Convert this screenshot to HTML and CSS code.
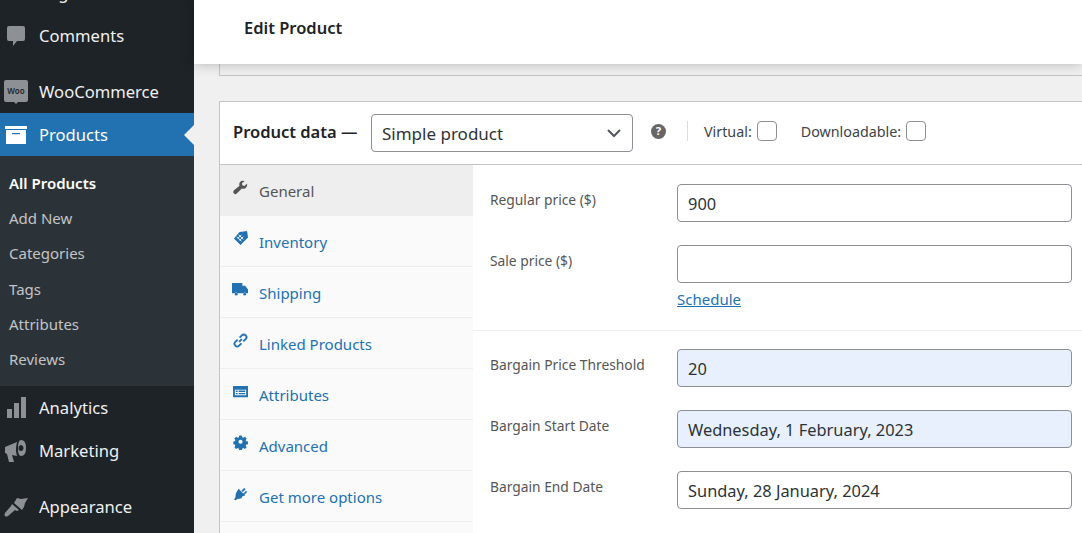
FILE: index.html
```html
<!DOCTYPE html>
<html lang="en">
<head>
    <meta charset="UTF-8">
    <title>Edit Product</title>
    <link rel="stylesheet" href="styles.css">
</head>
<body>
<div class="page">

<nav class="sidebar">
    <a class="menu-item"><svg class="menu-icon" viewBox="0 0 20 20"><path d="M3 2h14v14H3z"/></svg>Pages</a>
    <a class="menu-item comments"><svg class="menu-icon" viewBox="0 0 20 20"><path d="M3 0h14q2 0 2 2v11q0 2-2 2h-6l-4 5v-5H3q-2 0-2-2V2q0-2 2-2z"/></svg>Comments</a>
    <a class="menu-item woo"><svg class="menu-icon wide" viewBox="0 0 24 24"><path d="M2 0h20q2 0 2 2v18q0 2-2 2h-8l-2 2-2-2H2q-2 0-2-2V2q0-2 2-2z"/><text x="12" y="14" class="woo-text">Woo</text></svg>WooCommerce</a>
    <a class="menu-item current"><svg class="menu-icon wide" viewBox="0 0 24 20"><path d="M1 1h22v3H1zM2 5h20v14H2z"/><path class="cut" d="M8 8h8v1.200H8z"/></svg>Products</a>
    <ul class="submenu">
        <li class="active">All Products</li>
        <li>Add New</li>
        <li>Categories</li>
        <li>Tags</li>
        <li>Attributes</li>
        <li>Reviews</li>
    </ul>
    <a class="menu-item analytics"><svg class="menu-icon wide" viewBox="0 0 24 24"><path d="M3 13h5v9H3zM10 7h5v15h-5zM17 1h5v21h-5z"/></svg>Analytics</a>
    <a class="menu-item marketing"><svg class="menu-icon wide" viewBox="0 0 24 24"><path d="M1 8l12-5q-2 8 0 14l-5-1 2 7H5l-2-8-2-1z"/><path fill-rule="evenodd" d="M17 1q5 0 5 8t-5 8q-3 0-3-8t3-8zm0 5a2.500 3 0 1 0 .01 0z"/></svg>Marketing</a>
    <a class="menu-item appearance"><svg class="menu-icon wide" viewBox="0 0 24 24"><path d="M13 3l4 1 7-1-3 5-1 4-2 3-8-7zM8 9l7 6-2 1-2-1-7 6q-2 1-3 0t0-3l6-7z"/></svg>Appearance</a>
</nav>

<main class="content">
    <header class="topbar"><h1>Edit Product</h1></header>
    <div class="prev-box"></div>

    <section class="product-data">
        <div class="box-head">
            <span class="box-title">Product data —</span>
            <div class="select">Simple product
                <svg class="chevron" viewBox="0 0 16 16"><path d="M2 5l6 6 6-6"/></svg>
            </div>
            <svg class="help" viewBox="0 0 16 16"><circle cx="8" cy="8" r="8"/><text x="8" y="12" class="help-text">?</text></svg>
            <span class="head-sep"></span>
            <label class="check-label">Virtual:<span class="checkbox"></span></label>
            <label class="check-label">Downloadable:<span class="checkbox"></span></label>
        </div>

        <div class="box-body">
            <ul class="tabs">
                <li class="tab active"><svg class="tab-icon" viewBox="0 0 16 16"><path d="M15 4l-3 2.500-2-1-.5-2L12.500 1Q9 0 7.500 2T7 6L1 11q-1.500 2 0 3.500t3 0L9.500 9q3 1 4.500-1t1-4z"/></svg>General</li>
                <li class="tab"><svg class="tab-icon" viewBox="0 0 16 16"><path d="M7 1l8-1 1 7-8 8-7-7z"/><path class="tab-cut" d="M5 8l4-4M7 10l4-4M6 4l5 5M4 6l5 5"/></svg>Inventory</li>
                <li class="tab"><svg class="tab-icon truck" viewBox="0 0 17 14"><path d="M0 0h11v3h3l3 4v4h-2a2 2 0 0 0-3 0H6a2 2 0 0 0-3 0H0z"/><circle cx="4.500" cy="12" r="1.500"/><circle cx="13.500" cy="12" r="1.500"/></svg>Shipping</li>
                <li class="tab"><svg class="tab-icon line" viewBox="0 0 16 16"><path d="M6.500 9.500l3-3M5 7L2.500 9.500q-2 2 0 4t4 0L9 11M7 5l2.500-2.500q2-2 4 0t0 4L11 9"/></svg>Linked Products</li>
                <li class="tab"><svg class="tab-icon" viewBox="0 0 16 14"><path fill-rule="evenodd" d="M0 1h16v12H0zM2 5v6h12V5zM3 6h2v1.500H3zM6 6h7v1.500H6zM3 8.500h2V10H3zM6 8.500h7V10H6z"/></svg>Attributes</li>
                <li class="tab"><svg class="tab-icon" viewBox="0 0 16 16"><path fill-rule="evenodd" d="M6.500 1h3l.4 2 1.300.6 1.800-1.100 2 2-1.100 1.800.6 1.300 2 .4v3l-2 .4-.6 1.300 1.100 1.800-2 2-1.800-1.100-1.300.6-.4 1.700h-3l-.4-1.700-1.300-.6-1.800 1.100-2-2 1.100-1.800-.6-1.300-1.700-.4v-3l1.700-.4.6-1.300-1.100-1.800 2-2 1.800 1.100 1.300-.6zM8 6a2.300 2.300 0 1 0 .01 0z" transform="translate(.5 -.5) scale(.94)"/></svg>Advanced</li>
                <li class="tab"><svg class="tab-icon" viewBox="0 0 16 16"><path d="M6 3l7 7-3 1-1 2-5 1-1 1.500L1 14l1.500-1.500L3 8l1-2zM9 5l3-3 1.500 1.500-3 3zM11 8l3-3 1 1.500-3 3z"/></svg>Get more options</li>
            </ul>

            <div class="panel">
                <div class="group">
                    <div class="field">
                        <label class="field-label">Regular price ($)</label>
                        <input class="field-input" type="text" value="900">
                    </div>
                    <div class="field">
                        <label class="field-label">Sale price ($)</label>
                        <div class="field-col">
                            <input class="field-input" type="text">
                            <a class="schedule">Schedule</a>
                        </div>
                    </div>
                </div>
                <div class="group">
                    <div class="field">
                        <label class="field-label">Bargain Price Threshold</label>
                        <input class="field-input filled" type="text" value="20">
                    </div>
                    <div class="field">
                        <label class="field-label">Bargain Start Date</label>
                        <input class="field-input filled" type="text" value="Wednesday, 1 February, 2023">
                    </div>
                    <div class="field">
                        <label class="field-label">Bargain End Date</label>
                        <input class="field-input" type="text" value="Sunday, 28 January, 2024">
                    </div>
                </div>
            </div>
        </div>
    </section>
</main>

</div>
</body>
</html>
```

FILE: styles.css
```css
* {
    box-sizing: border-box;
}
html, body {
    margin: 0;
    height: 100%;
    overflow: hidden;
}
body {
    font-family: 'Noto Sans', 'Open Sans', sans-serif;
    background-color: #f0f0f1;
    color: #3c434a;
}
.page {
    display: flex;
    height: 533px;
    overflow: hidden;
}

/* sidebar */
.sidebar {
    width: 194px;
    flex-shrink: 0;
    background-color: #1d2327;
    margin-top: -29px;
}
.menu-item {
    display: flex;
    align-items: center;
    height: 43px;
    padding-left: 4px;
    gap: 11px;
    color: #f0f0f1;
    font-size: 16.6px;
    position: relative;
}
.menu-icon {
    width: 20px;
    height: 20px;
    margin: 0 2px;
    fill: #8d9196;
    flex-shrink: 0;
}
.menu-icon.wide {
    width: 24px;
    height: 24px;
    margin: 0;
}
.comments {
    margin-bottom: 13px;
}
.woo-text {
    font-size: 8px;
    font-weight: 600;
    text-anchor: middle;
    fill: #1d2327;
}
.current {
    background-color: #2271b1;
    color: #fff;
}
.current .menu-icon {
    fill: #fff;
}
.current .cut {
    fill: #2271b1;
}
.current::after {
    content: "";
    position: absolute;
    right: 0;
    top: 12px;
    border: 10px solid transparent;
    border-right-color: #f0f0f1;
    border-left: 0;
}
.submenu {
    list-style: none;
    margin: 0;
    padding: 10px 0 9px;
    background-color: #2c3338;
    height: 230px;
}
.submenu li {
    height: 35.2px;
    line-height: 35.2px;
    padding-left: 9px;
    font-size: 15px;
    color: #c3c4c7;
}
.submenu .active {
    color: #fff;
    font-weight: 600;
}
.marketing {
    margin-bottom: 13px;
}

/* main column */
.content {
    flex: 1;
    min-width: 0;
}
.topbar {
    height: 64px;
    background-color: #fff;
    box-shadow: 0 0 12px rgba(0, 0, 0, 0.25);
    padding-left: 50px;
    position: relative;
}
.topbar h1 {
    margin: 0;
    font-size: 16.5px;
    font-weight: 600;
    line-height: 55px;
    color: #1d2327;
}
.prev-box {
    height: 12px;
    margin-left: 25px;
    border-left: 1px solid #c3c4c7;
    border-bottom: 1px solid #c3c4c7;
}
.product-data {
    margin: 25px 0 0 25px;
    background-color: #fff;
    border: 1px solid #c3c4c7;
    border-right: 0;
    height: 460px;
}
.box-head {
    display: flex;
    align-items: center;
    height: 63px;
    padding-left: 13px;
    border-bottom: 1px solid #c3c4c7;
}
.box-title {
    font-size: 16.5px;
    font-weight: 600;
    color: #1d2327;
    width: 138px;
    margin-top: -4px;
}
.select {
    width: 262px;
    height: 38px;
    border: 1px solid #8c8f94;
    border-radius: 4px;
    padding: 0 10px;
    display: flex;
    align-items: center;
    justify-content: space-between;
    font-size: 17px;
    color: #2c3338;
}
.chevron {
    width: 16px;
    height: 16px;
    fill: none;
    stroke: #50575e;
    stroke-width: 2;
}
.help {
    width: 15px;
    height: 15px;
    margin: -4px 21px 0 18px;
    fill: #666;
}
.help-text {
    fill: #fff;
    font-size: 12px;
    font-weight: 700;
    text-anchor: middle;
}
.head-sep {
    width: 1px;
    height: 20px;
    background-color: #dcdcde;
    margin: -4px 16px 0 0;
}
.check-label {
    display: flex;
    align-items: center;
    gap: 5px;
    font-size: 14.3px;
    color: #3c434a;
    margin: -4px 24px 0 0;
}
.checkbox {
    width: 20px;
    height: 20px;
    border: 1px solid #8c8f94;
    border-radius: 4px;
    background-color: #fff;
}
.box-body {
    display: flex;
}
.tabs {
    list-style: none;
    margin: 0;
    padding: 0;
    width: 253px;
    flex-shrink: 0;
    background-color: #fafafa;
    height: 400px;
}
.tab {
    height: 51px;
    display: flex;
    align-items: center;
    gap: 11px;
    padding: 2px 0 0 13px;
    font-size: 15px;
    color: #2271b1;
    border-bottom: 1px solid #eee;
}
.tab.active {
    background-color: #eee;
    color: #555;
}
.tab-icon {
    width: 15px;
    height: 15px;
    margin-top: -7px;
    fill: #2271b1;
    flex-shrink: 0;
}
.tab.active .tab-icon {
    fill: #555;
}
.tab-icon.truck {
    width: 16px;
    margin-left: -1px;
}
.tab-icon.line {
    fill: none;
    stroke: #2271b1;
    stroke-width: 2;
}
.tab-cut {
    fill: none;
    stroke: #fafafa;
    stroke-width: 1;
}
.panel {
    flex: 1;
    min-width: 0;
    display: flex;
    flex-direction: column;
}
.group {
    display: flex;
    flex-direction: column;
    gap: 23px;
    border-bottom: 1px solid #eee;
    padding: 19px 10px 21px 17px;
}
.group:last-child {
    border-bottom: 0;
    padding-top: 18px;
}
.field {
    display: flex;
    align-items: flex-start;
}
.field-label {
    width: 187px;
    flex-shrink: 0;
    font-size: 13.8px;
    line-height: 32px;
    color: #555;
}
.field-col {
    flex: 1;
    display: flex;
    flex-direction: column;
}
.field-input {
    flex: 1;
    width: 100%;
    height: 38px;
    padding: 0 10px;
    border: 1px solid #8c8f94;
    border-radius: 4px;
    background-color: #fff;
    font: inherit;
    font-size: 16.4px;
    color: #2c3338;
}
.field-col .field-input {
    flex: none;
}
.field-input.filled {
    background-color: #e8f0fe;
}
.schedule {
    margin-top: 6px;
    font-size: 15px;
    color: #2271b1;
    text-decoration: underline;
}
```
